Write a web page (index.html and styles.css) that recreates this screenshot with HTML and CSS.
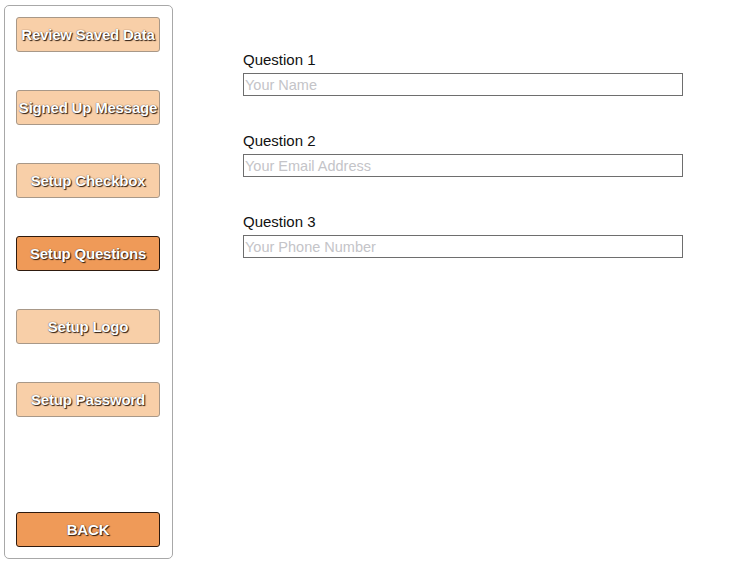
FILE: index.html
```html
<!DOCTYPE html>
<html>
<head>
<meta charset="utf-8">
<link rel="stylesheet" href="styles.css">
</head>
<body>
<div class="app">
  <nav class="sidebar">
    <div class="menu">
      <button class="btn">Review Saved Data</button>
      <button class="btn">Signed Up Message</button>
      <button class="btn">Setup Checkbox</button>
      <button class="btn active">Setup Questions</button>
      <button class="btn">Setup Logo</button>
      <button class="btn">Setup Password</button>
    </div>
    <button class="btn active back">BACK</button>
  </nav>
  <main class="main">
    <div class="field">
      <label class="label">Question 1</label>
      <input class="input" type="text" placeholder="Your Name">
    </div>
    <div class="field">
      <label class="label">Question 2</label>
      <input class="input" type="text" placeholder="Your Email Address">
    </div>
    <div class="field">
      <label class="label">Question 3</label>
      <input class="input" type="text" placeholder="Your Phone Number">
    </div>
  </main>
</div>
</body>
</html>
```

FILE: styles.css
```css
html, body {
  margin: 0;
  padding: 0;
  background: #fff;
}
.app {
  display: flex;
  align-items: flex-start;
  padding: 5px 0 0 4px;
  font-family: "Liberation Sans", Arial, sans-serif;
}
.sidebar {
  box-sizing: border-box;
  width: 169px;
  height: 554px;
  border: 1px solid #a8a8a8;
  border-radius: 5px;
  padding: 11px 11px 11px 11px;
  display: flex;
  flex-direction: column;
  justify-content: space-between;
}
.menu {
  display: flex;
  flex-direction: column;
  gap: 38px;
}
.btn {
  box-sizing: border-box;
  width: 144px;
  height: 35px;
  margin: 0;
  padding: 0 0 1px 0;
  background: #f8cfa8;
  border: 1px solid #a89888;
  border-radius: 3px;
  color: #fff;
  font-family: "Liberation Sans", Arial, sans-serif;
  font-weight: bold;
  font-size: 15px;
  letter-spacing: -0.2px;
  text-shadow: 1px 1px 1px #2a1a10, 0 0 1px #4a3020;
  white-space: nowrap;
}
.btn.active {
  background: #ef9a58;
  border: 1px solid #2e1a0e;
}
.main {
  margin-left: 70px;
  padding-top: 46px;
  display: flex;
  flex-direction: column;
  gap: 36px;
}
.field {
  display: flex;
  flex-direction: column;
  gap: 5px;
}
.label {
  font-size: 15px;
  line-height: 17px;
  color: #111;
}
.input {
  box-sizing: border-box;
  width: 440px;
  height: 23px;
  margin: 0;
  border: 1px solid #6e6e6e;
  border-radius: 0;
  padding: 0 1px;
  font-family: "Liberation Sans", Arial, sans-serif;
  font-size: 14.5px;
  outline: none;
}
.input::placeholder {
  color: #c4c4c8;
}
```
